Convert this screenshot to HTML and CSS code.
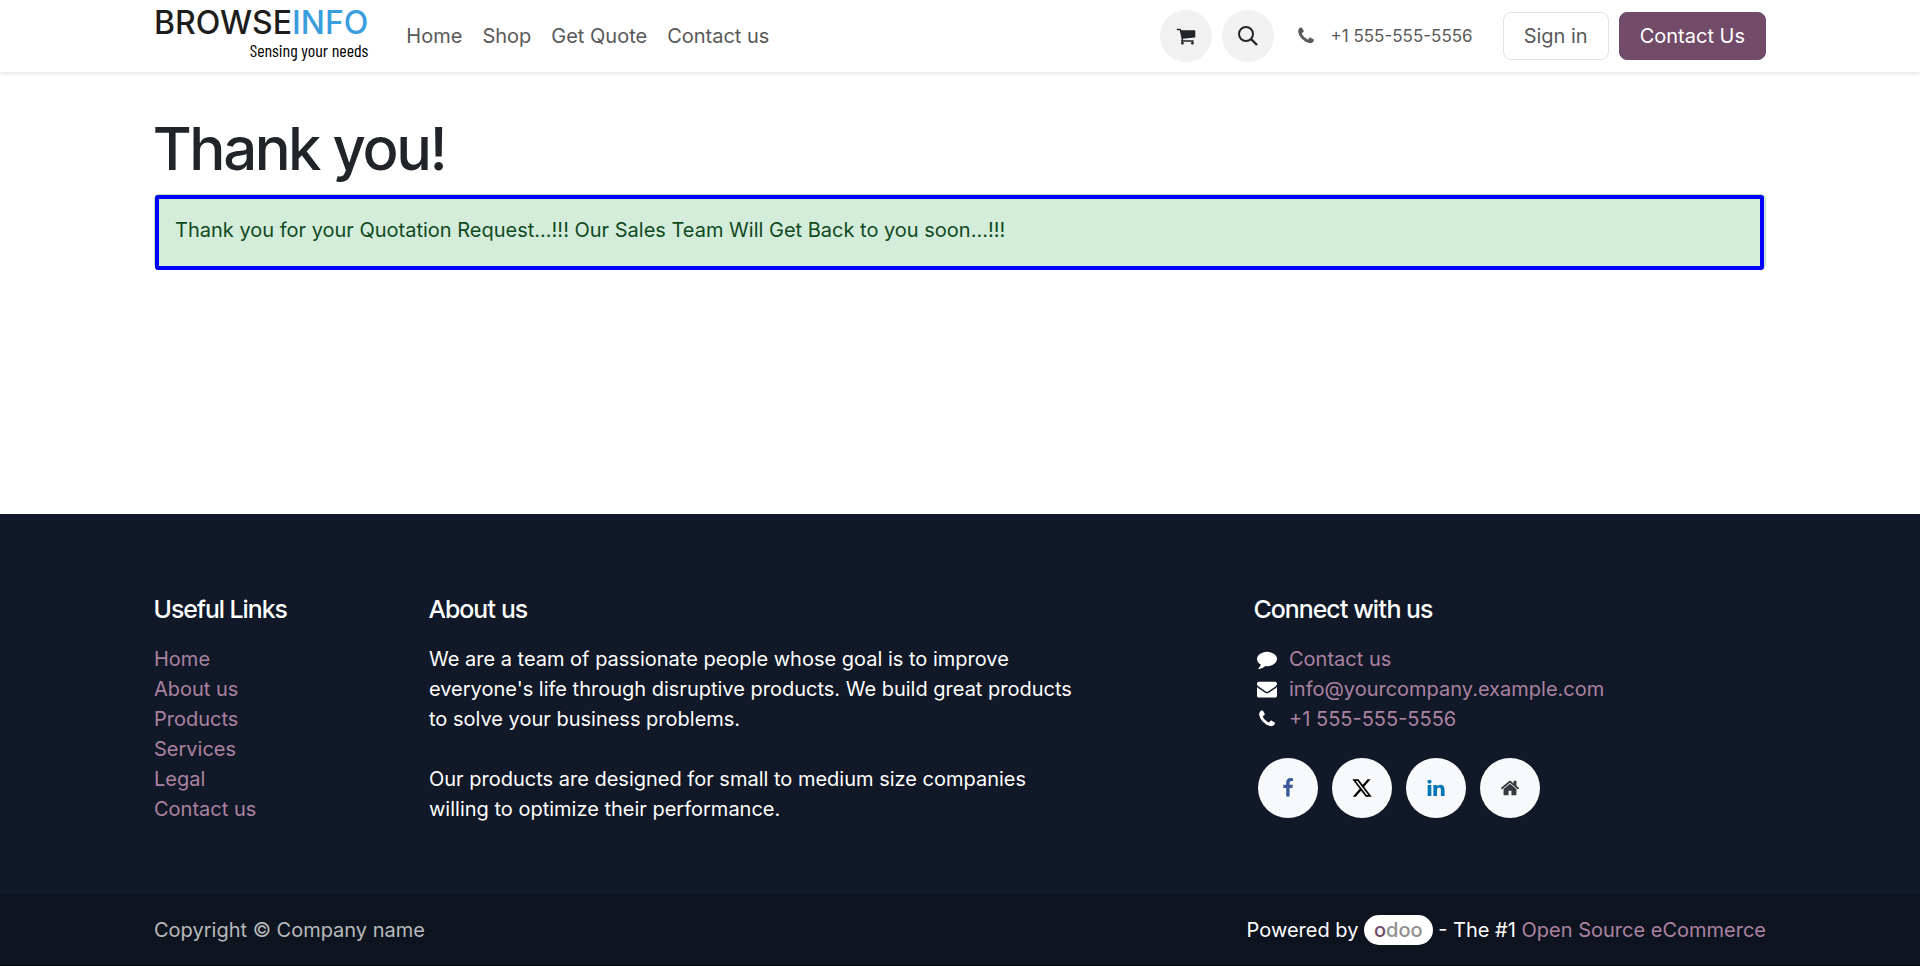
FILE: index.html
```html
<!DOCTYPE html>
<html lang="en">
<head>
<meta charset="utf-8">
<title>Thank you!</title>
<link rel="stylesheet" href="styles.css">
</head>
<body>
<svg class="sprite" aria-hidden="true">
  <symbol id="phone" viewBox="0 0 1792 1792"><path d="M1600 1240q0 27-10 70.500t-21 68.500q-21 50-122 106-94 51-186 51-27 0-53-3.500t-57.500-12.500-47-14.500-55.500-20.500-49-18q-98-35-175-83-127-79-264-216t-216-264q-48-77-83-175-3-9-18-49t-20.500-55.500-14.500-47-12.500-57.500-3.500-53q0-92 51-186 56-101 106-122 25-11 68.500-21t70.500-10q14 0 21 3 18 6 53 76 11 19 30 54t35 63.500 31 53.500q3 4 17.500 25t21.500 35.500 7 28.500q0 20-28.500 50t-62 55-62 53-28.500 46q0 9 5 22.500t8.500 20.500 14 24 11.500 19q76 137 174 235t235 174q2 1 19 11.500t24 14 20.500 8.500 22.500 5q18 0 46-28.500t53-62 55-62 50-28.500q14 0 28.500 7t35.500 21.500 25 17.500q25 15 53.500 31t63.500 35 54 30q70 35 76 53 3 7 3 21z"/></symbol>
</svg>
<header class="site-header">
  <div class="container header-row">
    <a class="logo" href="#">
      <span class="logo-name">BROWSE<span class="logo-accent">INFO</span></span>
      <span class="logo-tagline">Sensing your needs</span>
    </a>
    <nav class="nav">
      <a href="#">Home</a>
      <a href="#">Shop</a>
      <a href="#">Get Quote</a>
      <a href="#">Contact us</a>
    </nav>
    <div class="actions">
      <a class="round" href="#" aria-label="Cart"><svg class="icon" viewBox="0 0 1792 1792"><path d="M704 1536q0 52-38 90t-90 38-90-38-38-90 38-90 90-38 90 38 38 90zm896 0q0 52-38 90t-90 38-90-38-38-90 38-90 90-38 90 38 38 90zm128-1088v512q0 24-16.500 42.500t-40.500 21.500l-1044 122q13 60 13 70 0 16-24 64h920q26 0 45 19t19 45-19 45-45 19h-1024q-26 0-45-19t-19-45q0-11 8-31.500t16-36 21.500-40 15.500-29.500l-177-823h-204q-26 0-45-19t-19-45 19-45 45-19h256q16 0 28.500 6.500t19.500 15.500 13 24.500 8 26 5.500 29.500 4.500 26h1201q26 0 45 19t19 45z"/></svg></a>
      <button class="round" type="button" aria-label="Search"><svg class="icon" viewBox="0 0 20 20"><circle cx="8" cy="8" r="7" fill="none" stroke="currentColor" stroke-width="2"/><path d="M13 13l6 6" stroke="currentColor" stroke-width="2.400"/></svg></button>
      <a class="phone" href="#"><svg class="icon"><use href="#phone"/></svg>+1 555-555-5556</a>
      <a class="btn btn-outline" href="#">Sign in</a>
      <a class="btn btn-primary" href="#">Contact Us</a>
    </div>
  </div>
</header>
<main class="main">
  <div class="container">
    <h1>Thank you!</h1>
    <div class="alert" role="status">Thank you for your Quotation Request...!!! Our Sales Team Will Get Back to you soon...!!!</div>
  </div>
</main>
<footer class="site-footer">
  <div class="container footer-grid">
    <section class="col-links">
      <h2>Useful Links</h2>
      <ul>
        <li><a href="#">Home</a></li>
        <li><a href="#">About us</a></li>
        <li><a href="#">Products</a></li>
        <li><a href="#">Services</a></li>
        <li><a href="#">Legal</a></li>
        <li><a href="#">Contact us</a></li>
      </ul>
    </section>
    <section class="col-about">
      <h2>About us</h2>
      <p>We are a team of passionate people whose goal is to improve everyone's life through disruptive products. We build great products to solve your business problems.</p>
      <p>Our products are designed for small to medium size companies willing to optimize their performance.</p>
    </section>
    <section class="col-connect">
      <h2>Connect with us</h2>
      <ul class="contact">
        <li><svg class="icon" viewBox="0 0 1792 1792"><path d="M1792 896q0 174-120 321.500t-326 233-450 85.500q-70 0-145-8-198 175-460 242-49 14-114 22-17 2-30.500-9t-17.500-29v-1q-3-4-.5-12t2-10 4.500-9.500l6-9 7-8.500 8-9q7-8 31-34.500t34.500-38 31-39.500 32.500-51 27-59 26-76q-157-89-247.500-220t-90.500-281q0-130 71-248.500t191-204.500 286-136.500 348-50.500 348 50.500 286 136.500 191 204.500 71 248.500z"/></svg><a href="#">Contact us</a></li>
        <li><svg class="icon" viewBox="0 0 1792 1792"><path d="M1792 710v794q0 66-47 113t-113 47h-1472q-66 0-113-47t-47-113v-794q44 49 101 87 362 246 497 345 57 42 92.500 65.500t94.500 48 110 24.500h2q51 0 110-24.500t94.500-48 92.500-65.500q170-123 498-345 57-39 100-87zm0-294q0 79-49 151t-122 123q-376 261-468 325-10 7-42.500 31t-54 38.500-52 32.500-57.500 27-50 9h-2q-23 0-50-9t-57.500-27-52-32.500-54-38.500-42.500-31q-91-64-262-182.500t-205-142.500q-62-42-117-115.500t-55-136.500q0-78 41.500-130t118.500-52h1472q65 0 112.500 47t47.500 113z"/></svg><a href="#">info@yourcompany.example.com</a></li>
        <li><svg class="icon"><use href="#phone"/></svg><a href="#">+1 555-555-5556</a></li>
      </ul>
      <div class="social">
        <a class="facebook" href="#" aria-label="Facebook"><svg class="icon" viewBox="0 0 1792 1792"><path d="M1343 12v264h-157q-86 0-116 36t-30 108v189h293l-39 296h-254v759h-306v-759h-255v-296h255v-218q0-186 104-288.500t277-102.500q147 0 228 12z"/></svg></a>
        <a class="x" href="#" aria-label="X"><svg class="icon" viewBox="1 2 22 20"><path d="M18.244 2.250h3.308l-7.227 8.260 8.502 11.240H16.170l-5.214-6.817L4.990 21.750H1.680l7.730-8.835L1.254 2.250H8.080l4.713 6.231zm-1.161 17.520h1.833L7.084 4.126H5.117z"/></svg></a>
        <a class="linkedin" href="#" aria-label="LinkedIn"><svg class="icon" viewBox="0 0 1792 1792"><path d="M477 625v991h-330v-991h330zm21-306q1 73-50.500 122t-135.500 49h-2q-82 0-132-49t-50-122q0-74 51.500-122.500t134.500-48.500 133 48.500 51 122.500zm1166 729v568h-329v-530q0-105-40.500-164.500t-126.500-59.500q-63 0-105.500 34.500t-63.500 85.500q-11 30-11 81v553h-329q2-399 2-647t-1-296l-1-48h329v144h-2q20-32 41-56t56.500-52 87-43.500 114.500-15.500q171 0 275 113.500t104 332.500z"/></svg></a>
        <a class="home" href="#" aria-label="Home page"><svg class="icon" viewBox="0 0 1792 1792"><path d="M1472 992v480q0 26-19 45t-45 19h-384v-384h-256v384h-384q-26 0-45-19t-19-45v-480q0-1 .5-3t.5-3l575-474 575 474q1 2 1 6zm223-69l-62 74q-8 9-21 11h-3q-13 0-21-7l-692-577-692 577q-12 8-24 7-13-2-21-11l-62-74q-8-10-7-23.500t11-21.500l719-599q32-26 76-26t76 26l244 204v-195q0-14 9-23t23-9h192q14 0 23 9t9 23v408l219 182q10 8 11 21.500t-7 23.500z"/></svg></a>
      </div>
    </section>
  </div>
  <div class="copyright">
    <div class="container copyright-row">
      <span class="copy">Copyright © Company name</span>
      <span class="powered">Powered by <a class="odoo" href="#"><span class="odoo-o">o</span>doo</a> - The #1 <a href="#">Open Source eCommerce</a></span>
    </div>
  </div>
</footer>
</body>
</html>
```
FILE: styles.css
```css
* { box-sizing: border-box; }
body {
  margin: 0;
  min-height: 100vh;
  display: flex;
  flex-direction: column;
  font: 400 20px/30px Inter, "Noto Sans", sans-serif;
  color: #212529;
  background: #fff;
}
a { text-decoration: none; }
h1, h2, p, ul { margin: 0; padding: 0; }
ul { list-style: none; }
.sprite { display: none; }
.icon { width: 20px; height: 20px; fill: currentColor; flex: none; }
.container { width: 100%; max-width: 1650px; margin: 0 auto; padding: 0 19px; }

.site-header { padding: 10px 0; box-shadow: 0 2px 4px rgba(0, 0, 0, 0.1); }
.header-row { display: flex; align-items: center; }
.logo { display: flex; flex-direction: column; align-items: flex-end; gap: 2px; margin-right: 28px; color: #1d1d1b; }
.logo-name { font: 500 32px/26px Inter, sans-serif; }
.logo-accent { color: #3a9ddd; }
.logo-tagline { font: 400 18px/24px "Barlow Condensed", "Roboto Condensed", "Liberation Sans Narrow", sans-serif; color: #000; }
.nav { display: flex; }
.nav a { padding: 0 10px; color: #595959; }
.actions { display: flex; align-items: center; gap: 10px; margin-left: auto; }
.round {
  display: flex;
  align-items: center;
  justify-content: center;
  width: 52px;
  height: 52px;
  padding: 0;
  border: 0;
  border-radius: 50%;
  background: #f1f1f1;
  color: #212529;
}
.phone { display: flex; align-items: center; gap: 14px; padding: 0 20px 0 12px; font-size: 17px; color: #595959; }
.btn { padding: 8px 20px; border: 1px solid; border-radius: 8px; }
.btn-outline { border-color: #e2e3e5; color: #595959; }
.btn-primary { border-color: #714b67; background: #714b67; color: #fff; }

.main { flex: 1; padding: 40px 0; }
h1, h2 { font-family: "Inter Tight", Inter, sans-serif; font-weight: 500; }
h1 { margin-bottom: 10px; font-size: 60px; line-height: 72px; }
.alert {
  position: relative;
  padding: 20px 20px 23px;
  border: 1px solid #b7dfc4;
  border-radius: 5px;
  background: #d4eddb;
  color: #0f4a1e;
}
.alert::after {
  content: "";
  position: absolute;
  inset: 0 1px -2px 0;
  border: 4px solid #0000fb;
  border-radius: 3px;
}

.site-footer { background: #111827; color: #fff; }
.site-footer a { color: #ab82a1; }
.footer-grid { display: grid; grid-template-columns: repeat(12, 1fr); column-gap: 38px; padding-top: 80px; padding-bottom: 70px; }
.col-links { grid-column: 1 / span 2; }
.col-about { grid-column: 3 / span 5; }
.col-connect { grid-column: 9 / span 4; }
h2 { margin-bottom: 20px; font-size: 25px; line-height: 30px; }
.col-about p + p { margin-top: 30px; }
.contact li { display: flex; align-items: center; gap: 12px; padding-left: 3px; }
.social { display: flex; gap: 14px; margin: 24px 0 0 4px; }
.social a { display: flex; align-items: center; justify-content: center; width: 60px; height: 60px; border-radius: 50%; background: #f8f9fa; }
.site-footer .facebook { color: #3b5998; }
.site-footer .x { color: #000; }
.site-footer .linkedin { color: #0077b5; }
.site-footer .home { color: #343a40; }
.x .icon { width: 20px; height: 18px; }
.copyright { padding: 21px 0 20px; background: #0e141f; border-bottom: 1px solid #03060c; }
.copyright-row { display: flex; justify-content: space-between; }
.copy { color: #b7b9bc; }
.site-footer .odoo { display: inline-block; padding: 0 10px; border-radius: 15px; background: #fff; color: #8f8f8f; font-weight: 500; }
.odoo-o { color: #714b67; }
```
